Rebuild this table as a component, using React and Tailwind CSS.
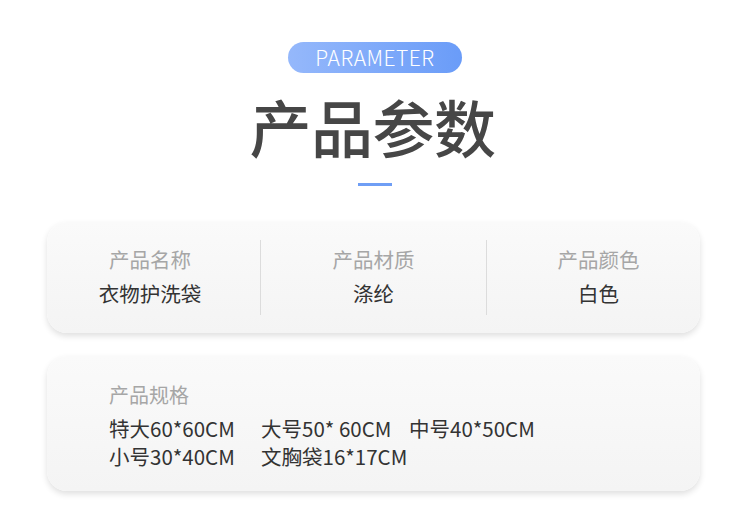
import React from "react";

const specs = [
  { label: "产品名称", value: "衣物护洗袋", pad: "pr-[7px]" },
  { label: "产品材质", value: "涤纶", pad: "" },
  { label: "产品颜色", value: "白色", pad: "pl-[10px]" },
];

function App() {
  return (
    <div
      className="w-[750px] h-[521px] bg-white overflow-hidden flex flex-col items-center"
      style={{ fontFamily: '"Noto Sans CJK SC", "Noto Sans", sans-serif' }}
    >
      {/* header */}
      <div className="mt-[42px] w-[174px] h-[31px] rounded-full bg-gradient-to-r from-[#95b8fb] to-[#6a9cf8] flex items-center justify-center">
        <span className="text-white text-[21px] font-light tracking-[0.5px] leading-none">PARAMETER</span>
      </div>
      <h1 className="mt-[21px] -ml-[5px] text-[62px] leading-[64px] font-medium text-[#464646] tracking-[-0.5px]">产品参数</h1>
      <div className="mt-[25px] w-[34px] h-[3px] bg-[#6f9ef5]"></div>

      {/* basic info card */}
      <div className="mt-[36px] self-start ml-[47px] w-[653px] h-[111px] rounded-[20px] bg-gradient-to-b from-[#fafafa] to-[#f4f4f4] shadow-[0_3px_6px_rgba(0,0,0,0.13)] grid grid-cols-[213px_226px_1fr] items-center">
        {specs.map((s, idx) => (
          <div
            key={idx}
            className={
              "h-[75px] flex flex-col items-center justify-center pb-[4px] " +
              s.pad +
              (idx > 0 ? " border-l border-[#dcdcdc]" : "")
            }
          >
            <div className="text-[20.5px] leading-[28px] text-[#a6a6a6]">{s.label}</div>
            <div className="mt-[6px] text-[20.5px] leading-[28px] text-[#333]">{s.value}</div>
          </div>
        ))}
      </div>

      {/* size card */}
      <div className="mt-[23px] self-start ml-[47px] w-[653px] h-[135px] rounded-[20px] bg-gradient-to-b from-[#fafafa] to-[#f4f4f4] shadow-[0_3px_6px_rgba(0,0,0,0.13)] pl-[62px] pt-[25px]">
        <div className="text-[20px] leading-[28px] text-[#a6a6a6]">产品规格</div>
        <div className="mt-[5px] text-[20.5px] leading-[28px] text-[#333]">
          <div className="flex">
            <span className="w-[152px]">特大60*60CM</span>
            <span className="w-[148px]">大号50* 60CM</span>
            <span>中号40*50CM</span>
          </div>
          <div className="flex">
            <span className="w-[152px]">小号30*40CM</span>
            <span>文胸袋16*17CM</span>
          </div>
        </div>
      </div>
    </div>
  );
}

export default App;
